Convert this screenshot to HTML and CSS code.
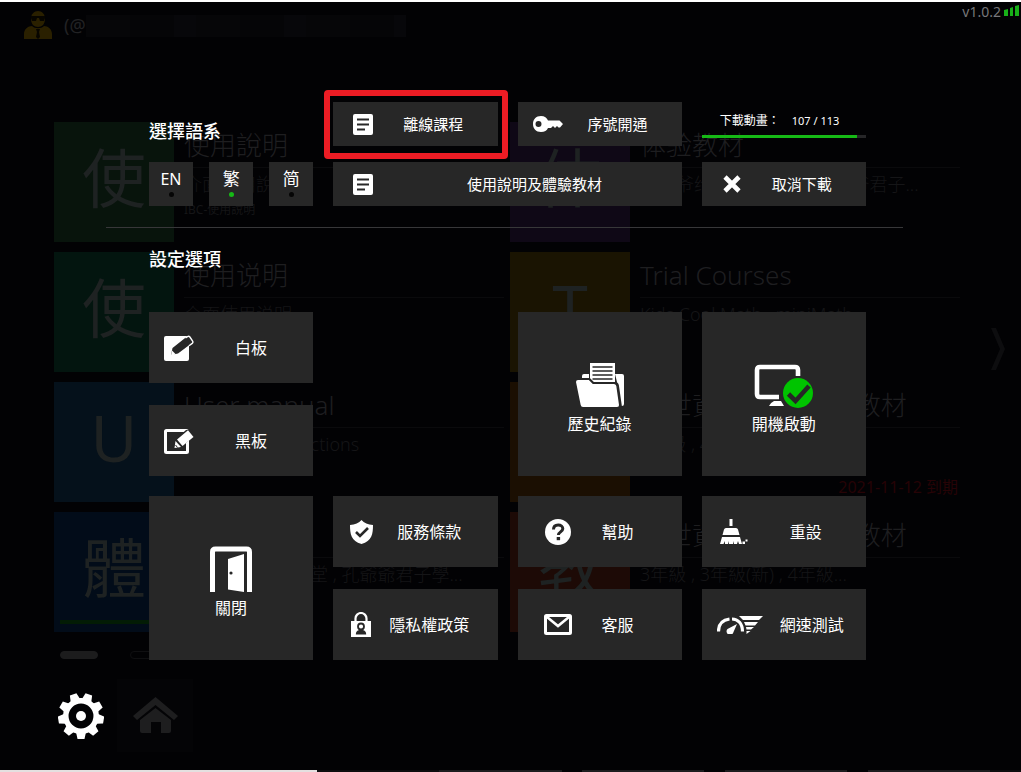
FILE: index.html
```html
<!DOCTYPE html>
<html lang="zh-Hant">
<head>
<meta charset="utf-8">
<meta name="viewport" content="width=device-width, initial-scale=1">
<title>設定選項</title>
<link rel="stylesheet" href="styles.css">
</head>
<body>
<div class="app">
  <div class="home">
    <header class="topbar">
      <svg class="avatar" viewBox="0 0 28 28" aria-hidden="true"><path d="M7 8C7 3 10 0 14 0s7 3 7 8c0 5-3 8-7 8s-7-3-7-8z" fill="#2a2000"/><path d="M7 5h14v2l-1 3h-4l-1-3h-2l-1 3H8L7 7z" fill="#070500"/><path d="M0 28v-5c0-5 4-8 8-8 3 3 9 3 12 0 4 0 8 3 8 8v5z" fill="#2a2000"/><path d="M12 18h4l-1 3 1 5-2 2-2-2 1-5z" fill="#070500"/></svg>
      <span class="account">(@</span>
      <span class="account-mask"></span>
      <span class="version">v1.0.2</span>
      <svg class="signal" viewBox="0 0 15 11" aria-hidden="true"><path d="M0 5l4-1v7H0zM6 3l3-1v9H6zM11 1l4-1v11h-4z" fill="#18b018"/></svg>
    </header>

    <main class="courses">
      <article class="course">
        <div class="cover green">使</div>
        <div class="info"><h3>使用說明</h3><p>介面使用說明</p><small>IBC-使用說明</small></div>
      </article>
      <article class="course" lang="zh-Hans">
        <div class="cover purple">体</div>
        <div class="info"><h3>体验教材</h3><p>孔爷爷给孩子们课堂 , 孔爷爷君子...</p></div>
      </article>
      <article class="course" lang="zh-Hans">
        <div class="cover teal">使</div>
        <div class="info"><h3>使用说明</h3><p>介面使用说明</p></div>
      </article>
      <article class="course">
        <div class="cover yellow">T</div>
        <div class="info"><h3>Trial Courses</h3><p>Kids Cool Math , miniMath</p></div>
      </article>
      <article class="course">
        <div class="cover blue">U</div>
        <div class="info"><h3>User manual</h3><p>Interface Instructions</p></div>
      </article>
      <article class="course">
        <div class="cover orange">新</div>
        <div class="info"><h3>新世資訊國小 數學教材</h3><p>3年級 , 4年級</p><small>10年級</small><time>2021-11-12 到期</time></div>
      </article>
      <article class="course">
        <div class="cover navy">體<span class="loaded"></span></div>
        <div class="info"><h3>體驗教材</h3><p>孔爺爺給孩子課堂 , 孔爺爺君子學...</p></div>
      </article>
      <article class="course">
        <div class="cover red">教</div>
        <div class="info"><h3>新世資訊國小 數學教材</h3><p>3年級 , 3年級(新) , 4年級...</p><small>10年級</small></div>
      </article>
      <svg class="next" viewBox="0 0 16 42" aria-hidden="true"><path d="M1 0h5l9 21-9 21H1l9-21z" fill="#0d0d0f"/></svg>
    </main>

    <div class="pager"><span class="page current"></span><span class="page"></span></div>

    <div class="dock">
      <svg viewBox="0 0 45 37" aria-hidden="true"><path d="M22.500 0 45 19l-4 4L22.500 8 4 23l-4-4z" fill="#1e1e1f"/><path d="M22.500 11 38 23v11q0 2-2 2h-8V25H18v11H9q-2 0-2-2V23z" fill="#1e1e1f"/></svg>
    </div>
    <div class="taskbar"></div>
  </div>

  <section class="overlay" aria-label="設定">
    <div class="panel">
      <div class="board quick">
        <h2>選擇語系</h2>
        <button class="tile marked" type="button">
          <span class="icon"><svg width="20" height="21" viewBox="0 0 20 21"><rect width="20" height="21" rx="2" fill="#fff"/><path d="M4 5.500h12M4 10.500h12M4 15.500h8" stroke="#272727" stroke-width="1.800"/></svg></span>
          <span class="label">離線課程</span>
        </button>
        <button class="tile" type="button">
          <span class="icon"><svg width="30" height="16" viewBox="0 0 30 16"><path fill-rule="evenodd" d="M8 0c3.500 0 6 2 7 4.500h11.500L30 8l-3 3.500h-1.500L24 10l-2 2-2-2-2 2h-3C14 14.500 11.500 16 8 16c-5 0-8-3.500-8-8s3-8 8-8zM5.500 5A3 3 0 1 0 5.500 11 3 3 0 1 0 5.500 5z" fill="#fff"/></svg></span>
          <span class="label">序號開通</span>
        </button>
        <div class="download">
          <label for="download"><span>下載動畫：</span><span class="count">107 / 113</span></label>
          <progress id="download" value="107" max="113"></progress>
        </div>
        <div class="languages">
          <button class="language latin" type="button">EN<i></i></button>
          <button class="language active" type="button">繁<i></i></button>
          <button class="language" type="button" lang="zh-Hans">简<i></i></button>
        </div>
        <button class="tile wide" type="button">
          <span class="icon"><svg width="20" height="21" viewBox="0 0 20 21"><rect width="20" height="21" rx="2" fill="#fff"/><path d="M4 5.500h12M4 10.500h12M4 15.500h8" stroke="#272727" stroke-width="1.800"/></svg></span>
          <span class="label">使用說明及體驗教材</span>
        </button>
        <button class="tile" type="button">
          <span class="icon"><svg width="18" height="18" viewBox="0 0 18 18"><path d="M2 2l14 14M16 2 2 16" stroke="#fff" stroke-width="4.600"/></svg></span>
          <span class="label">取消下載</span>
        </button>
      </div>

      <hr>
      <h2 class="options-title">設定選項</h2>

      <div class="bands">
        <div class="board options">
          <button class="tile first" type="button">
            <span class="icon"><svg width="30" height="26" viewBox="0 0 30 26"><rect y="1" width="25" height="25" rx="2" fill="#fff"/><path d="M7 20l1.500-7L23 1.500q2-1 3 .5l2.500 3.500q1 1.500-.5 2.500L14 18.500z" fill="#272727"/><path d="M21.500 3 23.500 1.600q1.400-.8 2.400.4L28.600 6q.8 1.400-.4 2.400L25 10.800" fill="none" stroke="#fff" stroke-width="1.400"/><path d="M8 15.500l4 4-5 1z" fill="#fff"/></svg></span>
            <span class="label">白板</span>
          </button>
          <button class="tile big third" type="button">
            <svg width="48" height="46" viewBox="0 0 48 46"><path d="M6 14q0-2 2-2h5v4H6zM39 12h7q2 0 2 2v28q0 2-2 2h-1L41 20z" fill="#fff"/><path d="M14 1h25v20H17l-3-3z" fill="#fff"/><path d="M16.500 5h20M16.500 9h20M16.500 13h20M16.500 17h20" stroke="#272727" stroke-width="1.700"/><path d="M2 18h11l4 4h21q2 0 2.300 2L43 43q.2 2-2 2H7q-2 0-2.300-2L0 20q0-2 2-2z" fill="#fff"/><path d="M2 17h11.500L17.500 21H38.500q3 0 3.500 2.500l3 21" fill="none" stroke="#272727" stroke-width="1.800"/></svg>
            <span class="label">歷史紀錄</span>
          </button>
          <button class="tile big fourth" type="button">
            <svg width="60" height="46" viewBox="0 0 60 46"><path d="M44 14V8q0-3-3-3H6Q3 5 3 8v24q0 3 3 3h19" fill="none" stroke="#fff" stroke-width="4.600"/><path d="M20 39h7l3 5H15q1-3 5-5z" fill="#fff"/><circle cx="44" cy="31" r="15" fill="#00c400"/><path d="M34.500 32l7 7L55 24" fill="none" stroke="#272727" stroke-width="4.600"/></svg>
            <span class="label">開機啟動</span>
          </button>
          <button class="tile first" type="button">
            <span class="icon"><svg width="30" height="26" viewBox="0 0 30 26"><rect x="1.500" y="2.500" width="22" height="22" rx="1" fill="none" stroke="#fff" stroke-width="3"/><path d="M9 20l2-8L22 2l6-1 1 8-13 11z" fill="#272727"/><path d="M24 2.300 29.500 9 18.500 18 13 11.500z" fill="#fff"/><path d="M11.500 13l5.500 6-6.500 1z" fill="#fff"/><path d="M11.500 17l2 2.500" stroke="#272727" stroke-width="1"/></svg></span>
            <span class="label">黑板</span>
          </button>
        </div>

        <div class="board options">
          <button class="tile big first" type="button">
            <svg width="42" height="46" viewBox="0 0 42 46"><path d="M2.500 46V6q0-3 3-3h31q3 0 3 3v40" fill="none" stroke="#fff" stroke-width="5"/><path d="M18 13l16-5v38l-16-2.500z" fill="#fff"/><circle cx="21" cy="27" r="1.600" fill="#272727"/></svg>
            <span class="label">關閉</span>
          </button>
          <button class="tile policy" type="button">
            <span class="icon"><svg width="23" height="24" viewBox="0 0 23 24"><path d="M11.500 0C14 3 18 4.500 23 5c0 9-1 16-11.500 19C1 21 0 14 0 5c5-.5 9-2 11.500-5z" fill="#fff"/><path d="M6 12l4 4 8-8" fill="none" stroke="#272727" stroke-width="2.600"/></svg></span>
            <span class="label">服務條款</span>
          </button>
          <button class="tile service" type="button">
            <span class="icon"><svg width="26" height="26" viewBox="0 0 26 26"><circle cx="13" cy="13" r="13" fill="#fff"/><path d="M8.500 10.500C8.500 7.500 10.500 6 13.200 6c2.800 0 4.600 1.600 4.600 3.800 0 3-4.400 3.200-4.400 6.200" fill="none" stroke="#272727" stroke-width="3"/><path d="M11.700 18h3.400v3.200h-3.400z" fill="#272727"/></svg></span>
            <span class="label">幫助</span>
          </button>
          <button class="tile reset" type="button">
            <span class="icon"><svg width="28" height="25" viewBox="0 0 28 25"><path d="M9.500 0h3v7h-3zM6 9h10q1.500 0 2 1.500l1.500 5.500h-17L4 10.500Q4.500 9 6 9zM2 18h18l2 7h-3l-1-3-1 3h-3v-3l-1 3H9v-3l-1 3H5v-3l-1.500 3H0zM22.500 22.500h2.500v2.500h-2.500zM25.500 20.500h2v2h-2z" fill="#fff"/></svg></span>
            <span class="label">重設</span>
          </button>
          <button class="tile policy" type="button">
            <span class="icon"><svg width="20" height="25" viewBox="0 0 20 25"><path d="M4.500 10V6.500a5.500 5.500 0 0 1 11 0V10" fill="none" stroke="#fff" stroke-width="2.200"/><path d="M0 9h20v16H0z" fill="#fff"/><circle cx="10" cy="14.500" r="3" fill="none" stroke="#272727" stroke-width="1.800"/><path d="M4.800 22.500q0-4 3.500-4.500h3.400q3.500.5 3.500 4.500z" fill="#272727"/></svg></span>
            <span class="label">隱私權政策</span>
          </button>
          <button class="tile service" type="button">
            <span class="icon"><svg width="28" height="21" viewBox="0 0 28 21"><rect x="1.500" y="1.500" width="25" height="18" rx="1" fill="none" stroke="#fff" stroke-width="3"/><path d="M3 3l11 9L25 3" fill="none" stroke="#fff" stroke-width="2.600"/></svg></span>
            <span class="label">客服</span>
          </button>
          <button class="tile speed" type="button">
            <span class="icon"><svg width="46" height="18" viewBox="0 0 46 18"><path d="M1.500 15.500C1.500 9 5 4 12.500 3M15 3c6 0 10.500 4.500 10.500 12.500" fill="none" stroke="#fff" stroke-width="3.200"/><path d="M10.500 13 20 8l-3.500 8a3.500 3.500 0 1 1-6-3z" fill="#fff"/><path d="M22 0h24l-4 4H26zM27 6h14l-3 3.500H28.500zM29 11h8l-3 2.500h-4.500zM29.500 15h4l-4 3z" fill="#fff"/></svg></span>
            <span class="label">網速測試</span>
          </button>
        </div>
      </div>
    </div>

    <button class="settings" type="button" aria-label="設定">
      <svg width="46" height="46" viewBox="-23 -23 46 46"><g fill="#fff"><path id="tooth" d="M-5 16h10l-1.500 7h-7z"/><use href="#tooth" transform="rotate(40)"/><use href="#tooth" transform="rotate(80)"/><use href="#tooth" transform="rotate(120)"/><use href="#tooth" transform="rotate(160)"/><use href="#tooth" transform="rotate(200)"/><use href="#tooth" transform="rotate(240)"/><use href="#tooth" transform="rotate(280)"/><use href="#tooth" transform="rotate(320)"/></g><circle r="15.200" fill="none" stroke="#fff" stroke-width="5.500"/><circle r="5" fill="#fff"/></svg>
    </button>
  </section>
</div>
</body>
</html>
```
FILE: styles.css
```css
* { box-sizing: border-box; }

body {
  margin: 0;
  background: #020204;
  color: #fff;
  font-family: "Noto Sans", "Noto Sans CJK TC", sans-serif;
}

:lang(zh-Hans) { font-family: "Noto Sans", "Noto Sans CJK SC", sans-serif; }

h2, h3, p { margin: 0; }

.app { position: relative; }

/* Dimmed course list */
.home {
  display: flex;
  flex-direction: column;
  min-height: 100vh;
  border-top: 2px solid #fff;
}

.topbar {
  display: flex;
  align-items: flex-start;
  height: 120px;
  padding: 0 2px 0 24px;
}

.avatar { width: 28px; height: 28px; margin-top: 9px; }

.account {
  margin: 11px 0 0 12px;
  color: #222224;
  font-size: 18px;
  line-height: 24px;
}

.account-mask {
  width: 320px;
  height: 22px;
  margin-top: 13px;
  background: repeating-linear-gradient(90deg, #060608 0 44px, #050507 44px 88px, #07070a 88px 110px);
}

.version {
  margin-left: auto;
  color: #77777a;
  font-size: 14px;
  line-height: 20px;
}

.signal { width: 15px; height: 11px; margin: 3px 0 0 3px; }

.courses {
  position: relative;
  display: grid;
  grid-template-columns: 1fr 1fr;
  gap: 10px 6px;
  padding: 0 61px 0 54px;
}

.course { display: flex; gap: 10px; min-width: 0; }

.cover {
  position: relative;
  flex: none;
  width: 120px;
  height: 120px;
  color: #1e2222;
  font-size: 64px;
  line-height: 112px;
  text-align: center;
}

.green { background: #08140c; }
.purple { background: #0f0816; }
.teal { background: #03150f; }
.yellow { background: #1a1402; }
.blue { background: #05111b; }
.orange { background: #1b0f02; }
.navy { background: #020c19; }
.red { background: #1d0a06; }

.loaded {
  position: absolute;
  right: 6px;
  bottom: 8px;
  left: 6px;
  height: 4px;
  background: #031c05;
}

.info {
  position: relative;
  flex: 1;
  min-width: 0;
  color: #151517;
  white-space: nowrap;
}

.info h3 {
  height: 46px;
  border-bottom: 1px solid #0a0a0c;
  color: #1e1e20;
  font-size: 26px;
  font-weight: 300;
  line-height: 46px;
}

.info p { font-size: 18px; font-weight: 300; line-height: 32px; }
.info small { display: block; font-size: 12px; line-height: 20px; }

.info time {
  position: absolute;
  right: 2px;
  bottom: 5px;
  color: #260306;
  font-size: 16px;
  line-height: 20px;
}

.next {
  position: absolute;
  top: 206px;
  right: 15px;
  width: 16px;
  height: 42px;
}

.pager { display: flex; gap: 32px; padding: 19px 60px 20px; }

.page {
  width: 38px;
  height: 8px;
  border: 1px solid #0f0f11;
  border-radius: 4px;
}

.page.current { border-color: #1c1c1d; background: #1c1c1d; }

.dock {
  display: grid;
  place-items: center;
  width: 76px;
  height: 73px;
  margin: 0 0 18px 117px;
  background: #040406;
}

.dock svg { width: 45px; height: 37px; }

.taskbar {
  height: 2px;
  margin-top: auto;
  background: linear-gradient(90deg, #e4e0e0 0 31%, #0d0d0e 31% 43%, #1c1c1e 43% 55%, #020204 55% 57%, #1c1c1e 57% 69%, #020204 69% 71%, #1c1c1e 71% 83%, #020204 83% 85%, #1c1c1e 85% 97%, #0d0d0e 97%);
}

/* Settings overlay */
.overlay {
  position: absolute;
  inset: 0;
  padding: 102px 118px 0 106px;
}

.board {
  display: grid;
  grid-template-columns: repeat(4, minmax(0, 1fr));
  column-gap: 20px;
  margin: 0 37px 0 43px;
}

.quick { grid-template-rows: 44px 44px; row-gap: 16px; }
.options { grid-template-rows: 71px 71px; row-gap: 22px; }
.bands { display: grid; gap: 20px; }

h2 { font-size: 18px; font-weight: 500; line-height: 24px; }

.quick h2 { align-self: end; line-height: 30px; }
.options-title { margin: 19px 43px 41px; }

hr {
  height: 1px;
  margin: 21px 0 0;
  border: 0;
  background: #373739;
}

button {
  padding: 0;
  border: 0;
  background: #272727;
  color: #fff;
  font: inherit;
  cursor: pointer;
}

.tile {
  position: relative;
  display: flex;
  align-items: center;
  padding-right: 24px;
  font-size: 15px;
  line-height: 20px;
  white-space: nowrap;
}

.options .tile { font-size: 16px; }
.icon { display: flex; flex: none; justify-content: center; width: 60px; }
.label { display: flex; flex: 1; justify-content: center; min-width: 0; }

.wide { grid-column: span 2; padding-right: 6px; }
.policy { padding-right: 28px; }
.policy .icon { width: 56px; }
.service { padding-right: 44px; }
.service .icon { width: 80px; }
.reset { padding-right: 20px; }
.reset .icon { width: 64px; }
.speed { padding-right: 20px; }
.speed .icon { width: 76px; }

.options .big {
  flex-direction: column;
  justify-content: center;
  gap: 6px;
  grid-row: span 2;
  padding: 8px 0 0;
}

.big .label { flex: none; }
.first { grid-column: 1; padding-right: 20px; }
.third { grid-column: 3; }
.fourth { grid-column: 4; }

.marked::after {
  content: "";
  position: absolute;
  inset: -12px -10px -13px -9px;
  border: 6px solid #ec1c24;
  border-radius: 4px;
}

.download { padding-top: 9px; }

.download label {
  display: flex;
  gap: 12px;
  padding-left: 18px;
  font-size: 12px;
  line-height: 20px;
  white-space: nowrap;
}

.download .count { font-size: 11px; }

progress {
  display: block;
  width: 100%;
  height: 3px;
  margin-top: 4px;
  border: 0;
  appearance: none;
  background: #262628;
}

progress::-webkit-progress-bar { background: #262628; }
progress::-webkit-progress-value { background: #16b916; }
progress::-moz-progress-bar { background: #16b916; }

.languages { display: flex; justify-content: space-between; }

.language {
  display: flex;
  flex-direction: column;
  align-items: center;
  width: 44px;
  height: 44px;
  padding-top: 5px;
  font-size: 17px;
  line-height: 24px;
}

.latin { font-size: 16px; }

.language i {
  width: 5px;
  height: 5px;
  margin-top: 1px;
  border-radius: 50%;
  background: #050505;
}

.language.active i { background: #16b916; }

.settings {
  position: absolute;
  top: 693px;
  left: 58px;
  width: 46px;
  height: 46px;
  background: none;
}

.settings svg { display: block; }
```
